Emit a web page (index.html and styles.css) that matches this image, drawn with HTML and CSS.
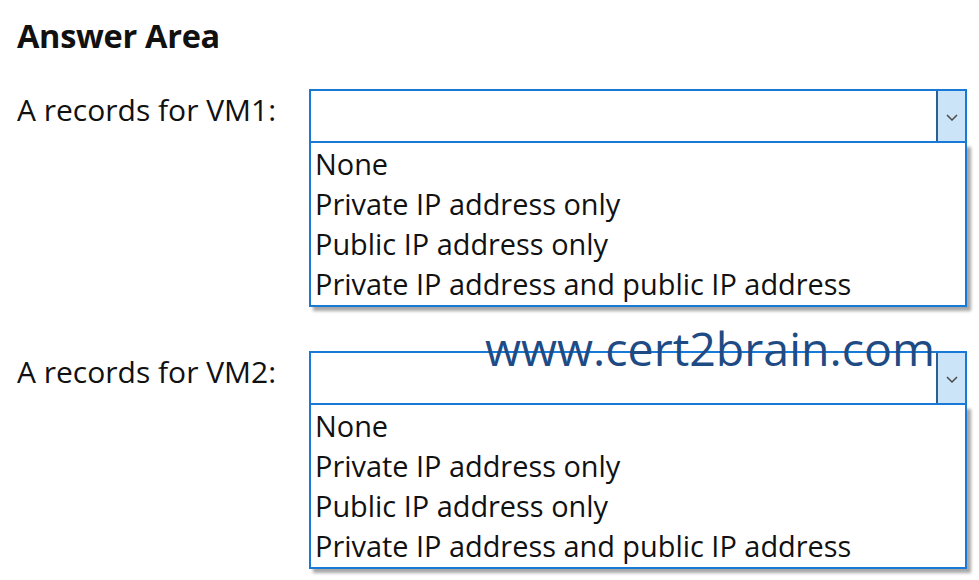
FILE: index.html
```html
<!DOCTYPE html>
<html lang="en">
<head>
	<meta charset="UTF-8">
	<title>Answer Area</title>
	<link rel="stylesheet" href="styles.css">
</head>
<body>
	<div id="answer">
		<h1 class="title">Answer Area</h1>
		<div class="row">
			<span class="label">A records for VM1:</span>
			<div class="dropdown">
				<div class="combo">
					<span class="btn">
						<svg width="12" height="7" viewBox="0 0 12 7"><polyline points="1,1 6,6 11,1" fill="none" stroke="#4a4a4a" stroke-width="1.5"/></svg>
					</span>
				</div>
				<ul class="options">
					<li>None</li>
					<li>Private IP address only</li>
					<li>Public IP address only</li>
					<li>Private IP address and public IP address</li>
				</ul>
			</div>
		</div>
		<div class="row row2">
			<span class="label">A records for VM2:</span>
			<div class="dropdown">
				<div class="combo">
					<span class="btn">
						<svg width="12" height="7" viewBox="0 0 12 7"><polyline points="1,1 6,6 11,1" fill="none" stroke="#4a4a4a" stroke-width="1.5"/></svg>
					</span>
				</div>
				<ul class="options">
					<li>None</li>
					<li>Private IP address only</li>
					<li>Public IP address only</li>
					<li>Private IP address and public IP address</li>
				</ul>
			</div>
		</div>
		<div class="mark">www.cert2brain.com</div>
	</div>
</body>
</html>
```

FILE: styles.css
```css
*{margin:0;padding:0;box-sizing:border-box;}
ul{list-style:none;}
body{background:#fff;font-family:"Open Sans","Noto Sans",sans-serif;color:#111;}
#answer{position:relative;width:979px;height:580px;padding:14px 0 0 17px;}
.title{font-size:32.5px;font-weight:700;line-height:44px;letter-spacing:-0.3px;}
.row{display:flex;align-items:flex-start;margin-top:31px;}
.row2{margin-top:44px;}
.label{width:292px;font-size:30px;line-height:40px;padding-top:1px;}
.dropdown{width:658px;}
.combo{height:54px;border:2px solid #1979d6;display:flex;justify-content:flex-end;}
.btn{width:29px;height:100%;background:#cce4f7;border-left:2px solid #2a5f93;display:flex;align-items:center;justify-content:center;padding-top:2px;}
.options{border:2px solid #1979d6;border-top:none;padding:1px 0 1px 4px;box-shadow:4px 4px 3px rgba(0,0,0,0.35);}
.options li{font-size:28.9px;line-height:40px;white-space:nowrap;}
.mark{position:absolute;left:485px;top:318px;font-size:46.5px;line-height:60px;color:#1f4b84;}
```
